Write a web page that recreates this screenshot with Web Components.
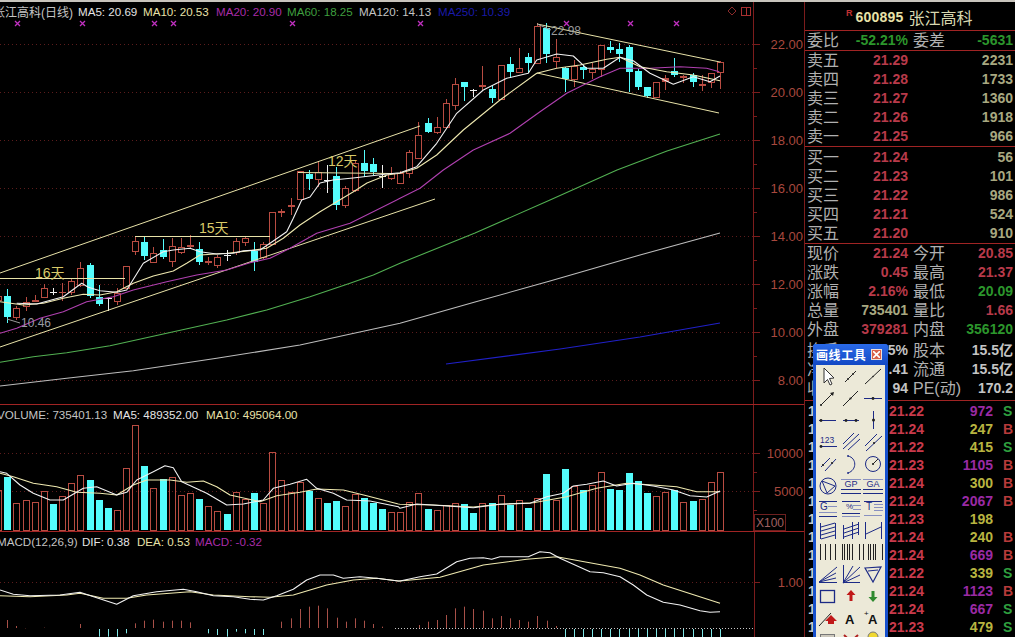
<!DOCTYPE html>
<html lang="zh">
<head>
<meta charset="utf-8">
<title>张江高科</title>
<style>
	html, body { margin: 0; height: 100%; overflow: hidden; background: #000; }
	body { font-family: "Liberation Sans", "Noto Sans CJK SC", sans-serif; }
	.screen { display: flex; flex-direction: column; height: 637px; position: relative; overflow: hidden; }
	.topbar { height: 2px; background: #c8c4bc; flex: none; }
	.main { display: flex; flex: 1; min-height: 0; }
	.charts { width: 804px; flex: none; display: flex; flex-direction: column; }
	.w { color: #e4e4e4; } .y { color: #e8e2a8; } .p { color: #a82ca8; } .g { color: #3f9f3f; } .s { color: #c4c4c4; } .b { color: #1a1aa8; }
</style>
</head>
<body>
<div class="screen">
	<div class="topbar"></div>
	<div class="main">
		<div class="charts">
			<chart-pane kind="price" top="2" height="403">
				<span style="margin-left:-7px;width:85px;font-size:12px" class="s">张江高科(日线)</span>
				<span style="width:65px" class="w">MA5: 20.69</span>
				<span style="width:73px" class="y">MA10: 20.53</span>
				<span style="width:71px" class="p">MA20: 20.90</span>
				<span style="width:72px" class="g">MA60: 18.25</span>
				<span style="width:79px" class="s">MA120: 14.13</span>
				<span class="b">MA250: 10.39</span>
			</chart-pane>
			<chart-pane kind="volume" top="405" height="127">
				<span style="margin-left:-3px;width:116px" class="s">VOLUME: 735401.13</span>
				<span style="width:93px" class="w">MA5: 489352.00</span>
				<span class="y">MA10: 495064.00</span>
			</chart-pane>
			<chart-pane kind="macd" top="532" height="105">
				<span style="margin-left:-3px;width:85px" class="s">MACD(12,26,9)</span>
				<span style="width:55px" class="w">DIF: 0.38</span>
				<span style="width:58px" class="y">DEA: 0.53</span>
				<span class="p">MACD: -0.32</span>
			</chart-pane>
		</div>
		<quote-panel></quote-panel>
	</div>
	<draw-toolbar></draw-toolbar>
</div>

<script>
	const AXIS = '#7c1c1c';
	const LINE = '#a02424';
	const RED = '#b94c42';
	const CYAN = '#54fcfc';
	const cx = i => 7.3 + 9.137 * i;
	const z = (list, x0, y0) => list.map(([x, y]) => [x0 + x / 3, y0 + y / 3]);
	const poly = (pts, color, w = 1.1) => `<polyline fill="none" stroke="${color}" stroke-width="${w}" stroke-linejoin="round" points="${pts.map(p => p[0].toFixed(1) + ',' + p[1].toFixed(1)).join(' ')}"/>`;
	const seg = (x1, y1, x2, y2, color, w = 1) => `<line x1="${x1}" y1="${y1}" x2="${x2}" y2="${y2}" stroke="${color}" stroke-width="${w}"/>`;
	const dots = (y, color = '#5c1c1c') => `<line x1="0" x2="753" y1="${y}" y2="${y}" stroke="${color}" stroke-dasharray="1 3"/>`;
	const axisText = (y, t) => `<text x="803" y="${y + 4.5}" text-anchor="end" fill="#a8483e" font-size="13">${t}</text>`;

	// top, bottom, wick top, wick bottom, kind
	const CANDLES = [
		[296,300,294,302,'r'],[296,317,289,323,'c'],[308,317,306,320,'r'],[302,306,297,311,'r'],[300,302,295,302,'f'],
		[288,297,284,297,'r'],[292,292,288,295,'w'],[292,293,283,301,'f'],[281,292,279,295,'r'],[268,285,262,287,'r'],
		[265,296,263,298,'c'],[297,304,285,306,'c'],[298,298,297,311,'w'],[293,301,288,305,'r'],[266,288,266,288,'r'],
		[241,251,237,255,'r'],[242,256,237,260,'c'],[253,262,247,262,'r'],[250,257,239,259,'c'],[246,261,238,267,'r'],
		[247,252,238,254,'r'],[245,247,235,248,'f'],[249,262,242,265,'c'],[261,263,257,265,'f'],[257,265,255,268,'r'],
		[255,255,250,261,'w'],[241,252,238,255,'r'],[238,242,237,246,'r'],[251,262,242,271,'c'],[244,257,242,259,'r'],
		[212,244,212,244,'r'],[211,213,209,217,'f'],[205,207,198,215,'f'],[171,199,171,199,'r'],[174,179,170,190,'c'],
		[172,179,161,187,'r'],[180,180,165,193,'w'],[176,205,167,210,'c'],[188,205,186,208,'r'],[163,190,160,192,'r'],
		[163,171,150,177,'c'],[164,172,158,175,'c'],[176,176,165,188,'w'],[173,178,167,180,'r'],[173,183,171,184,'r'],
		[152,173,150,178,'r'],[135,158,122,158,'r'],[123,132,118,133,'c'],[127,132,117,134,'r'],[103,127,99,127,'r'],
		[84,105,78,110,'r'],[82,87,82,101,'c'],[90,90,89,97,'w'],[85,87,66,90,'f'],[89,98,85,103,'c'],
		[65,99,65,100,'r'],[64,72,57,78,'c'],[68,72,48,72,'r'],[57,63,53,73,'c'],[26,63,23,63,'r'],
		[28,54,23,63,'c'],[57,61,39,68,'r'],[68,79,67,92,'c'],[66,79,60,87,'r'],[67,70,65,79,'c'],
		[69,72,63,79,'r'],[45,69,45,77,'r'],[47,50,41,53,'c'],[49,54,43,62,'c'],[47,72,45,92,'c'],
		[71,87,69,90,'c'],[87,96,87,98,'c'],[82,97,82,97,'r'],[78,82,75,90,'f'],[71,75,58,77,'c'],
		[76,78,75,83,'f'],[75,82,73,87,'c'],[84,86,75,91,'f'],[73,82,73,88,'r'],[62,72,61,89,'r']
	];

	const VOLUME = [
		[-1,255,'r'],[0,215,'c'],[1,295,'r'],[2,285,'r'],[3,290,'r'],[4,258,'r'],[5,296,'c'],[6,273,'r'],[7,235,'r'],[8,210,'r'],
		[9,225,'c'],[10,285,'c'],[11,308,'c'],[12,316,'r'],[13,190,'r'],[14,60,'r'],[15,183,'c'],[16,250,'r'],[17,222,'c'],[18,217,'r'],
		[19,270,'r'],[20,265,'r'],[21,282,'c'],[22,303,'r'],[23,318,'r'],[24,327,'c'],[25,262,'r'],[26,282,'r'],[27,264,'c'],[28,293,'r'],
		[29,140,'r'],[30,226,'r'],[31,262,'r'],[32,230,'r'],[33,258,'c'],[34,280,'r'],[35,293,'c'],[36,288,'c'],[37,303,'r'],[38,268,'r'],
		[39,279,'c'],[40,293,'c'],[41,312,'c'],[42,322,'r'],[43,322,'r'],[44,292,'r'],[45,265,'r'],[46,312,'c'],[47,316,'r'],[48,300,'r'],
		[49,295,'r'],[50,297,'c'],[51,324,'c'],[52,295,'r'],[53,294,'c'],[54,270,'r'],[55,300,'c'],[56,286,'r'],[57,308,'c'],[58,280,'r'],
		[59,207,'c'],[60,285,'r'],[61,192,'c'],[62,243,'r'],[63,255,'c'],[64,240,'r'],[65,202,'r'],[66,252,'c'],[67,255,'c'],[68,204,'c'],
		[69,228,'c'],[70,264,'c'],[71,273,'r'],[72,262,'r'],[73,255,'c'],[74,290,'r'],[75,288,'c'],[76,282,'r'],[77,232,'r'],[78,202,'r']
	];

	function drawCandles() {
		let out = '';
		for (let k = 0; k < CANDLES.length; k++) {
			const [t, b, wt, wb, kind] = CANDLES[k];
			const x = Math.round(cx(k - 1));
			const color = kind === 'c' ? CYAN : kind === 'w' ? '#f0f0f0' : RED;
			if (wt < t) out += seg(x + .5, wt, x + .5, t, color);
			if (wb > b) out += seg(x + .5, b, x + .5, wb, color);
			if (kind === 'c') out += `<rect x="${x - 3}" y="${t}" width="7" height="${b - t}" fill="${CYAN}"/>`;
			if (kind === 'r') out += `<rect x="${x - 2.5}" y="${t + .5}" width="6" height="${b - t}" fill="#000" stroke="${RED}"/>`;
			if (kind === 'f') out += `<rect x="${x - 3}" y="${t}" width="7" height="${b - t}" fill="${RED}"/>`;
			if (kind === 'w') out += seg(x - 3, t + .5, x + 4, t + .5, color);
		}
		return out;
	}

	function drawPrice() {
		let out = '';
		for (let y = 44.5; y < 400; y += 48) out += dots(y);
		out += drawCandles();
		// averages
		const ma5 = [...z([[50,310],[110,312],[135,305],[190,290],[245,250],[265,262],[300,272],[350,277],[380,270],[430,190],[490,155],[520,150],[570,145],[600,155],[650,162],[700,160],[730,152],[780,150],[810,130],[860,95],[880,55],[905,0]], 0, 200),
			[310,197],[320,183],[333,180],[353,178],[387,174],
			...z([[0,518],[50,500],[110,430],[170,340],[250,270],[320,235],[385,220],[410,180],[470,162],[520,168],[560,205],[610,205],[660,172],[700,182],[750,220],[820,253],[880,230],[930,245],[960,228]], 400, 0)];
		const ma10 = [...z([[0,305],[70,315],[130,310],[190,295],[250,283],[300,285],[350,275],[400,250],[460,228],[520,213],[560,190],[600,165],[680,160],[750,152],[800,145],[850,115],[900,75],[960,35],[1010,5]], 0, 200),
			[353,192],[367,183],[387,175],
			...z([[0,520],[50,505],[110,465],[190,390],[300,300],[410,220],[470,205],[540,195],[620,178],[660,172],[720,200],[800,215],[880,225],[960,242]], 400, 0)];
		const ma20 = [...z([[0,400],[50,385],[120,355],[190,335],[260,305],[340,290],[400,270],[500,245],[590,225],[680,210],[750,188],[810,175],[870,145],[950,100],[1050,70],[1130,30],[1190,0]], 0, 200),
			...z([[0,595],[60,565],[130,510],[220,450],[330,400],[420,335],[500,280],[600,230],[660,205],[750,205],[840,200],[920,205],[958,215]], 400, 0)];
		const ma60 = [...z([[0,487],[100,470],[200,458],[330,437],[500,400],[680,360],[800,330],[930,290],[1050,250],[1120,225],[1200,190]], 0, 200),
			[475,233],[550,200],[617,170],[667,151],[720,134]];
		const ma120 = [...z([[0,558],[200,535],[400,512],[650,475],[900,435],[1200,370]], 0, 200), [475,302],[550,281],[640,255],[720,233]];
		// trend lines sit under the averages
		out += poly([[0,273],[420,126]], '#e8e2a8', 1);
		out += poly([[0,347],[435,199]], '#e8e2a8', 1);
		out += poly([[537,24],[720,62]], '#e8e2a8', 1);
		out += poly([[537,73],[719,113]], '#e8e2a8', 1);
		out += seg(0, 278.5, 125, 278.5, '#e8e2a8');
		out += seg(135, 236.5, 270, 236.5, '#e8e2a8');
		out += seg(298, 172.5, 392, 173.5, '#e8e2a8');
		out += poly(ma20, '#b040b0') + poly(ma60, '#52b052') + poly(ma120, '#bcbcbc');
		out += poly([[446,364],[560,349],[640,337],[720,323]], '#2020c8');
		out += poly(ma10, '#efe9b0') + poly(ma5, '#f2f2f2');
		// day counts and extremes
		[['16天', 35, 278], ['15天', 199, 233], ['12天', 328, 166]].forEach(([t, x, y]) => {
			out += `<text x="${x}" y="${y}" fill="#d9c968" font-size="14">${t}</text>`;
		});
		out += seg(537, 24, 551, 30, '#999') + `<text x="551" y="35" fill="#9a9a9a" font-size="12">22.98</text>`;
		out += seg(7, 319, 20, 323, '#999') + `<text x="21" y="327" fill="#9a9aa6" font-size="12">10.46</text>`;
		// signal marks
		[17, 82, 154, 173, 292, 420, 566, 630, 676].forEach(x => {
			out += `<path d="M${x - 2} 21l5 5M${x + 3} 21l-5 5" stroke="#c030c0" stroke-width="1.3"/>`;
		});
		// corner buttons
		out += `<path d="M732 7l4 4-4 4-4-4z" fill="none" stroke="#8a2a2a"/>`;
		out += `<rect x="741.5" y="7.5" width="9" height="8" fill="none" stroke="#a83030"/>` + seg(746.5, 7, 746.5, 16, '#a83030');
		// axis
		out += seg(753.5, 0, 753.5, 405, AXIS);
		for (let k = 0; k < 15; k++) {
			const y = 44.5 + 24 * k;
			out += seg(753, y, k % 2 ? 757 : 760, y, AXIS);
		}
		['22.00','20.00','18.00','16.00','14.00','12.00','10.00','8.00'].forEach((t, k) => out += axisText(44.5 + 48 * k, t));
		return out;
	}

	function drawVolume() {
		let out = dots(453.5) + dots(491.5);
		VOLUME.forEach(([i, v, kind]) => {
			const x = Math.round(cx(i));
			const top = Math.round(405 + v / 3);
			if (kind === 'c') out += `<rect x="${x - 3}" y="${top}" width="7" height="${530 - top}" fill="${CYAN}"/>`;
			else out += `<rect x="${x - 2.5}" y="${top + .5}" width="6" height="${530 - top}" fill="none" stroke="${RED}"/>`;
		});
		const ma5 = [...z([[0,200],[20,205],[60,240],[100,265],[150,285],[190,285],[250,250],[290,245],[350,270],[380,262],[410,225],[460,200],[495,182],[520,188],[545,230],[620,265],[680,300],[730,297],[790,285],[820,250],[870,238],[920,223],[950,250],[1000,265],[1040,285],[1110,288],[1195,305]], 0, 405),
			...z([[0,310],[50,297],[130,302],[220,308],[300,298],[390,295],[440,275],[490,265],[520,243],[560,238],[610,228],[650,243],[700,235],[760,243],[820,255],[870,272],[920,276],[960,258]], 400, 405)];
		const ma10 = [...z([[0,205],[40,215],[100,235],[170,245],[230,262],[300,265],[350,270],[400,240],[440,225],[510,225],[560,232],[610,228],[650,245],[690,270],[780,290],[830,272],[900,262],[950,252],[1030,255],[1100,272],[1195,297]], 0, 405),
			...z([[0,298],[100,300],[220,306],[300,298],[400,293],[500,275],[590,250],[680,235],[760,240],[830,245],[890,260],[960,260]], 400, 405)];
		out += poly(ma10, '#efe9b0') + poly(ma5, '#f2f2f2');
		out += seg(753.5, 405, 753.5, 532, AXIS);
		[453.5, 472.5, 491.5, 510.5].forEach((y, k) => out += seg(753, y, k % 2 ? 757 : 760, y, AXIS));
		out += axisText(453.5, '10000') + axisText(491.5, '5000');
		out += `<rect x="754.5" y="514.5" width="31" height="16" fill="none" stroke="#6e2020"/>`;
		out += `<text x="756" y="527" fill="#a06060" font-size="12">X100</text>`;
		return out;
	}

	function drawMacd() {
		let out = dots(582.5);
		out += `<line x1="395" x2="753" y1="628.5" y2="628.5" stroke="#c8c8c8" stroke-dasharray="1 2"/>`;
		const up = [...z([[22,645],[49,663],[76,670],[133,668],[241,657],[405,655],[433,647],[460,644],[490,650],[517,647],[544,647],[571,652],[843,650],[873,640],[900,612],[928,605],[955,602],[982,610],[1010,638],[1037,650],[1065,640],[1093,647],[1120,657],[1147,665]], 0, 405),
			...z([[58,660],[85,650],[112,645],[139,630],[166,610],[193,605],[220,612],[250,617],[277,640],[304,633],[331,640],[358,645],[385,650],[412,633],[442,647],[469,663]], 400, 405)];
		up.forEach(([x, y]) => out += seg(Math.round(x) + .5, y, Math.round(x) + .5, 628, '#a85048'));
		const down = z([[298,695],[325,695],[352,695],[379,685],[625,685],[652,690],[682,695],[709,680],[736,685],[763,690],[790,690]], 0, 405);
		for (let i = 61; i < 79; i++) down.push([cx(i), 637]);
		down.forEach(([x, y]) => out += seg(Math.round(x) + .5, 629, Math.round(x) + .5, y, '#7fe8e8'));
		const dif = [...z([[0,555],[40,568],[90,572],[180,570],[240,562],[290,578],[350,598],[400,572],[470,560],[550,553],[590,560],[640,572],[700,575],[750,583],[790,585],[830,572],[880,553],[920,525],[960,510],[1000,510],[1030,520],[1080,515],[1130,520],[1195,528]], 0, 405),
			...z([[0,528],[60,515],[110,507],[170,470],[210,460],[250,458],[275,463],[300,455],[385,455],[420,440],[450,443],[480,460],[570,500],[610,503],[660,515],[700,540],[740,570],[790,592],[840,600],[900,617],[930,622],[960,620]], 400, 405)];
		const dea = [...z([[0,572],[90,575],[200,570],[240,565],[310,580],[380,580],[440,570],[570,560],[640,570],[750,575],[810,577],[880,570],[980,540],[1060,525],[1130,520],[1195,528]], 0, 405),
			...z([[0,528],[120,517],[250,480],[380,463],[470,455],[660,490],[720,510],[790,540],[960,595]], 400, 405)];
		out += poly(dea, '#efe9b0') + poly(dif, '#f2f2f2');
		out += seg(754.5, 532, 754.5, 637, AXIS);
		out += seg(754, 582.5, 760, 582.5, AXIS) + axisText(582.5, '1.00');
		return out;
	}

	const DRAW = { price: drawPrice, volume: drawVolume, macd: drawMacd };

	class ChartPane extends HTMLElement {
		constructor() {
			super();
			this.attachShadow({ mode: 'open' });
		}

		connectedCallback() {
			const top = +this.getAttribute('top');
			const height = +this.getAttribute('height');
			const kind = this.getAttribute('kind');
			this.shadowRoot.innerHTML = `
				<style>
					:host { display: block; position: relative; height: ${height}px; flex: none; overflow: hidden; }
					svg { display: block; font-family: "Liberation Sans", "Noto Sans CJK SC", sans-serif; }
					.legend {
						position: absolute;
						inset: 0 0 auto 0;
						display: flex;
						height: 18px;
						align-items: center;
						font-size: 11.6px;
						white-space: nowrap;
					}
					::slotted(span) { flex: none; }
					.rule { position: absolute; left: 0; right: 0; bottom: 0; height: 1px; background: ${LINE}; }
				</style>
				<svg width="804" height="${height}" viewBox="0 ${top} 804 ${height}">${DRAW[kind]()}</svg>
				<div class="legend"><slot></slot></div>
				${kind === 'macd' ? '' : '<div class="rule"></div>'}
			`;
		}
	}

	class QuoteRow extends HTMLElement {
		constructor() {
			super();
			this.attachShadow({ mode: 'open' });
		}

		connectedCallback() {
			const get = n => this.getAttribute(n) || '';
			this.shadowRoot.innerHTML = `
				<style>
					:host { display: grid; grid-template-columns: 101px 100px; grid-template-rows: 19px; column-gap: 5px; height: 19px; align-items: center; padding-left: 2px; }
					.cell { display: flex; justify-content: space-between; align-items: center; white-space: nowrap; height: 19px; line-height: 19px; }
					.l { font-size: 16px; color: #b0b0b0; font-weight: normal; }
					.v { font-size: 14px; font-weight: bold; }
					.r { color: #b83a4a; } .g { color: #2c962c; } .y { color: #a8a880; } .w { color: #c4c4c4; }
				</style>
				<div class="cell"><span class="l">${get('a')}</span><span class="v ${get('ac')}">${get('av')}</span></div>
				<div class="cell"><span class="l">${get('b')}</span><span class="v ${get('bc')}">${get('bv')}</span></div>
			`;
		}
	}

	class TradeRow extends HTMLElement {
		constructor() {
			super();
			this.attachShadow({ mode: 'open' });
		}

		connectedCallback() {
			const get = n => this.getAttribute(n) || '';
			const flag = get('f');
			this.shadowRoot.innerHTML = `
				<style>
					:host { display: grid; grid-template-columns: 81px 36px 68px 10px 12px; height: 18px; align-items: center; padding-left: 3px; font-size: 14px; font-weight: bold; white-space: nowrap; }
					.t { color: #c8c8c8; }
					.p { color: #c83a4c; }
					.v { text-align: right; color: ${get('c') === 'p' ? '#9a2aa4' : '#b8b440'}; }
					.f { grid-column: 5; color: ${flag === 'S' ? '#2f9f3f' : '#b83a3a'}; }
				</style>
				<span class="t">${get('t')}</span><span class="p">${get('p')}</span><span class="v">${get('v')}</span><span class="f">${flag}</span>
			`;
		}
	}

	class QuotePanel extends HTMLElement {
		constructor() {
			super();
			this.attachShadow({ mode: 'open' });
		}

		connectedCallback() {
			const row = a => `<quote-row ${Object.keys(a).map(k => `${k}="${a[k]}"`).join(' ')}></quote-row>`;
			const asks = [['卖五','21.29','2231'],['卖四','21.28','1733'],['卖三','21.27','1360'],['卖二','21.26','1918'],['卖一','21.25','966']];
			const bids = [['买一','21.24','56'],['买二','21.23','101'],['买三','21.22','986'],['买四','21.21','524'],['买五','21.20','910']];
			const book = r => row({ a: r[0], av: r[1], ac: 'r', bv: r[2], bc: 'y' });
			const trades = [['21.22','972','S','p'],['21.24','247','B'],['21.22','415','S'],['21.23','1105','B','p'],['21.24','300','B'],['21.24','2067','B','p'],['21.23','198',''],['21.24','240','B'],['21.24','669','B','p'],['21.22','339','S'],['21.24','1123','B','p'],['21.24','667','S','p'],['21.23','479','S']];
			this.shadowRoot.innerHTML = `
				<style>
					:host { display: block; flex: 1; border-left: 1px solid ${AXIS}; font-family: "Liberation Sans", "Noto Sans CJK SC", sans-serif; min-width: 0; overflow: hidden; }
					section { border-bottom: 1px solid ${LINE}; }
					.head { height: 26px; display: flex; align-items: center; padding: 2px 0 0 41px; white-space: nowrap; }
					.mark { color: #c03030; font-size: 9px; font-weight: bold; margin-right: 3px; margin-top: -9px; }
					.code { color: #e8e2a8; font-size: 14px; font-weight: bold; letter-spacing: .2px; margin-right: 5px; }
					.name { color: #d8d8b0; font-size: 16px; }
					.ratio { height: 19px; }
					.book { height: 95px; }
					.stats { height: 156px; }
					.gap { height: 2px; }
					.trades { padding-top: 1px; }
				</style>
				<section class="head"><span class="mark">R</span><span class="code">600895</span><span class="name">张江高科</span></section>
				<section class="ratio">${row({ a: '委比', av: '-52.21%', ac: 'g', b: '委差', bv: '-5631', bc: 'g' })}</section>
				<section class="book">${asks.map(book).join('')}</section>
				<section class="book" style="height:96px"><div style="height:1px"></div>${bids.map(book).join('')}</section>
				<section class="stats">
					${row({ a: '现价', av: '21.24', ac: 'r', b: '今开', bv: '20.85', bc: 'r' })}
					${row({ a: '涨跌', av: '0.45', ac: 'r', b: '最高', bv: '21.37', bc: 'r' })}
					${row({ a: '涨幅', av: '2.16%', ac: 'r', b: '最低', bv: '20.09', bc: 'g' })}
					${row({ a: '总量', av: '735401', ac: 'y', b: '量比', bv: '1.66', bc: 'r' })}
					${row({ a: '外盘', av: '379281', ac: 'r', b: '内盘', bv: '356120', bc: 'g' })}
					<div class="gap"></div>
					${row({ a: '换手', av: '5%', ac: 'w', b: '股本', bv: '15.5亿', bc: 'w' })}
					${row({ a: '净资', av: '.41', ac: 'w', b: '流通', bv: '15.5亿', bc: 'w' })}
					${row({ a: '收益', av: '94', ac: 'w', b: 'PE(动)', bv: '170.2', bc: 'w' })}
				</section>
				<section class="trades" style="border:0">
					${trades.map(t => `<trade-row t="1" p="${t[0]}" v="${t[1]}" f="${t[2]}" c="${t[3] || ''}"></trade-row>`).join('')}
				</section>
			`;
		}
	}

	// toolbar icons, 22x22 cells, drawn row by row
	const NAVY = '#1c2a86';
	const K = '#222';
	const l = (x1, y1, x2, y2, c = NAVY, w = 1) => `<line x1="${x1}" y1="${y1}" x2="${x2}" y2="${y2}" stroke="${c}" stroke-width="${w}"/>`;
	const d = (x, y, c = K, r = 1.4) => `<circle cx="${x}" cy="${y}" r="${r}" fill="${c}"/>`;
	const t = (s, x, y, size = 9, c = NAVY, extra = '') => `<text x="${x}" y="${y}" font-size="${size}" fill="${c}" font-family="Liberation Sans, sans-serif" ${extra}>${s}</text>`;
	const vbars = xs => xs.map(x => l(x + .5, 3, x + .5, 19, K)).join('');
	const rows = (x1, x2, ys, c = NAVY) => ys.map(y => l(x1, y + .5, x2, y + .5, c)).join('');
	const ICONS = [
		`<path d="M7 3v15l3.500-3.500 2.500 5.500 2-1-2.500-5.500 4.500-.5z" fill="#fff" stroke="#333"/>`,
		l(5,17,16,6,K) + d(8,14,K,.9) + d(13,9,K,.9),
		l(3,19,19,4,K) + d(11,11.500,K,.8),
		l(4,18,16,6,K) + `<path d="M17 5l-4 1 3 3z" fill="${K}"/>` + d(4,18,K,1.1),
		l(3,19,18,4,K) + d(10.500,11.500,K,1.1),
		l(2,11.500,20,11.500) + d(11,11.500),
		l(2,11.500,19,11.500) + d(4,11.500),
		l(3,11.500,19,11.500) + d(6,11.500) + d(16,11.500),
		l(11.500,2,11.500,20) + d(11.500,11,K,1.5),
		t('123',3,12,8.500) + l(3,15.500,20,15.500) + d(4,15.500,K,1.4),
		l(3,13,14,2) + l(3,18,19,3) + l(8,19,20,8),
		l(3,15,15,3) + l(4,20,20,5) + d(12,12,K,1.1),
		l(4,14,13,5) + l(8,18,19,6) + d(6,12,K,1.1) + d(15,10,K,1.1),
		`<path d="M8 3c9 2 9 14 0 17" fill="none" stroke="${NAVY}"/>` + d(8,3,NAVY,.9) + d(8,20,NAVY,.9),
		`<circle cx="11" cy="11" r="7.500" fill="none" stroke="${NAVY}"/>` + l(11,11,16,6,K) + d(11,11,K,1.1),
		`<circle cx="11" cy="11" r="8" fill="none" stroke="${NAVY}"/><path d="M5 6l13 5-8 7z" fill="none" stroke="${NAVY}"/>`,
		l(1,4.500,21,4.500,'#8890c0') + t('GP',4.500,12,9) + l(1,14.500,21,14.500) + l(1,18.500,21,18.500),
		l(1,4.500,21,4.500,'#8890c0') + t('GA',4.500,12,9) + l(1,14.500,21,14.500) + l(1,18.500,21,18.500),
		l(2,4.500,20,4.500) + t('G',3,13,10) + rows(11,20,[9],'#8890c0') + l(2,15.500,20,15.500,'#8890c0') + l(2,19.500,20,19.500),
		t('%',6,12,8) + rows(2,20,[4]) + rows(13,21,[8,12],'#8890c0') + rows(2,20,[16]) + rows(2,20,[19],'#8890c0'),
		l(2,4.500,20,4.500) + t('T',4,13,10) + rows(12,21,[7,10,13],'#8890c0') + l(2,18.500,20,18.500,'#8890c0'),
		l(3.500,4,3.500,20) + l(18.500,4,18.500,20) + l(4,8,18,4) + l(4,12,18,8) + l(4,16,18,12) + l(4,20,18,16),
		l(3.500,6,3.500,20) + l(12.500,3,12.500,20) + l(18.500,3,18.500,16) + l(4,10,19,5) + l(4,14,19,9) + l(4,18,19,13),
		l(3.500,3,3.500,20) + l(19.500,3,19.500,20) + l(4,15,19,8),
		vbars([3,8,13,18]),
		vbars([2,4,7,9,12,19]),
		vbars([1,6,8,11,13,20]),
		l(2,19,20,4) + l(2,19,19,10) + l(2,19,19,15) + l(2,19.500,20,19.500),
		l(3.500,2,3.500,20) + l(3,20,20,4) + l(3,20,13,3) + l(3,20,20,12) + l(3,19.500,20,19.500),
		`<path d="M3 5l16-1-8 15z" fill="none" stroke="${NAVY}" stroke-width="1.2"/>` + l(6,8,16,7),
		`<rect x="3.500" y="5.500" width="14" height="12" fill="none" stroke="${NAVY}" stroke-width="1.3"/>`,
		`<path d="M11 5l4.500 5h-3v6h-3v-6h-3z" fill="#c01818"/>`,
		`<path d="M11 17l4.500-5h-3v-6h-3v6h-3z" fill="#2f8a2f"/>`,
		l(2,19,14,6,K) + `<path d="M14 8l6 6h-3v3h-6v-3h-3z" fill="#c01818"/>`,
		t('A',5,17,13,'#111','font-weight="bold"'),
		t('+',2,9,8,'#111') + t('A',6,17,13,'#111','font-weight="bold"'),
		`<rect x="3.500" y="5.500" width="14" height="12" fill="#ccc8bc" stroke="#777"/>` + l(6,9,15,9,'#777'),
		`<path d="M4 6l14 13M18 6L4 19" stroke="#b02020" stroke-width="2"/>`,
		`<circle cx="11" cy="8" r="5" fill="#f0d830" stroke="#777"/>`
	];

	class DrawToolbar extends HTMLElement {
		constructor() {
			super();
			this.attachShadow({ mode: 'open' });
		}

		connectedCallback() {
			this.shadowRoot.innerHTML = `
				<style>
					:host {
						position: absolute;
						left: 813px;
						top: 344px;
						bottom: 0;
						width: 75px;
						overflow: hidden;
						background: #1650cc;
						border-radius: 3px 3px 0 0;
						font-family: "Liberation Sans", "Noto Sans CJK SC", sans-serif;
					}
					.title { height: 21px; display: flex; align-items: center; justify-content: space-between; padding: 0 6px 0 3px; background: linear-gradient(#2a6ae8, #1248c4); }
					.title span { color: #fff; font-size: 12px; font-weight: bold; letter-spacing: .6px; white-space: nowrap; }
					.close { width: 11px; height: 11px; background: #d8604a; border: 1px solid #f0e0d8; color: #fff; display: flex; align-items: center; justify-content: center; box-sizing: border-box; }
					.body { margin: 0 3px; background: #ece9d8; display: grid; grid-template-columns: repeat(3, 22.5px); grid-auto-rows: 22px; padding: 0 1px; }
					svg { display: block; width: 22px; height: 22px; }
				</style>
				<div class="title"><span>画线工具</span><div class="close"><svg style="width:7px;height:7px" viewBox="0 0 7 7"><path d="M0 0l7 7M7 0L0 7" stroke="#fff" stroke-width="1.6"/></svg></div></div>
				<div class="body">${ICONS.map(i => `<svg viewBox="0 0 22 22">${i}</svg>`).join('')}</div>
			`;
		}
	}

	customElements.define('quote-row', QuoteRow);
	customElements.define('trade-row', TradeRow);
	customElements.define('quote-panel', QuotePanel);
	customElements.define('chart-pane', ChartPane);
	customElements.define('draw-toolbar', DrawToolbar);
</script>
</body>
</html>
